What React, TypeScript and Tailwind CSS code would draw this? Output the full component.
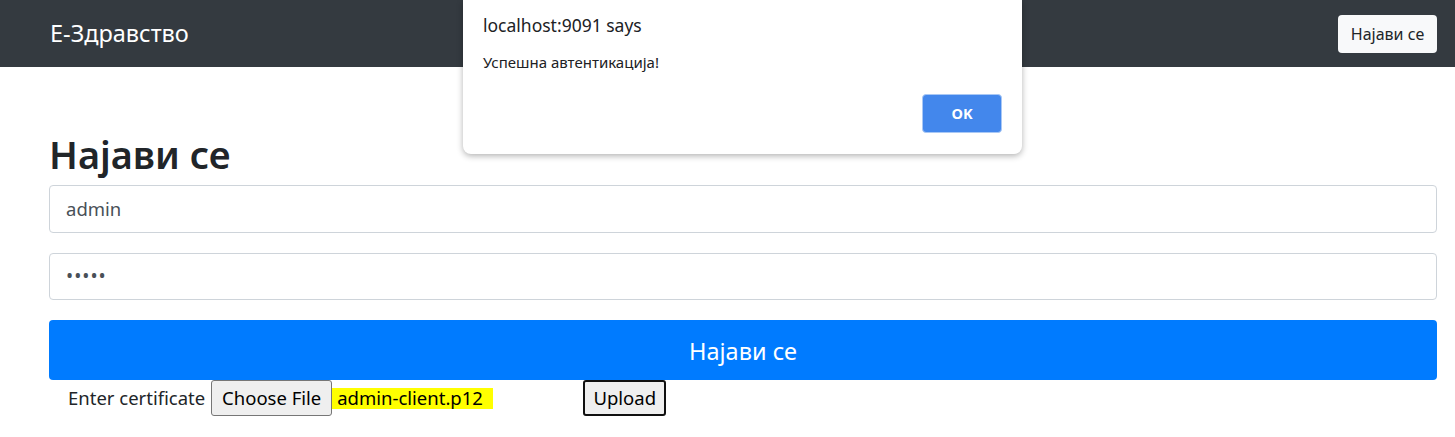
import React from "react";

const font = { fontFamily: '"Noto Sans", "Open Sans", sans-serif' };

export default function App() {
  return (
    <div className="relative min-h-[437px] bg-white" style={font}>
      <nav className="h-[67px] bg-[#343a40] flex items-center justify-between pl-[50px] pr-[18px]">
        <span className="text-white text-[23.5px] leading-none">E-Здравство</span>
        <button className="h-[38px] w-[99px] rounded-[4px] bg-[#f8f9fa] text-[#212529] text-[16px]">
          Најави се
        </button>
      </nav>

      <main className="pl-[49px] pr-[18px]">
        <h1 className="mt-[63px] mb-[7px] text-[38px] font-semibold leading-[48px] text-[#212529]">
          Најави се
        </h1>
        <div className="flex flex-col gap-[20px]">
          <div className="h-[48px] border border-[#ced4da] rounded-[4px] flex items-center px-[16px] text-[18.5px] text-[#495057]">
            admin
          </div>
          <div className="h-[47px] border border-[#ced4da] rounded-[4px] flex items-center px-[16px] text-[19px] text-[#495057] tracking-[1px]">
            •••••
          </div>
          <button className="h-[60px] rounded-[4px] bg-[#007bff] text-white text-[23.5px] pt-[3px]">
            Најави се
          </button>
        </div>
        <div className="flex items-center h-[36px] pl-[19px] text-[18.5px] text-[#212529]">
          <span className="mr-[6px]">Enter certificate</span>
          <button className="h-[36px] w-[121px] border border-[#767676] rounded-[3px] bg-[#efefef] text-[18.5px] text-black">
            Choose File
          </button>
          <span className="h-[21px] w-[161px] bg-[#ffff00] flex items-center pl-[5px] text-[18.5px] text-black">
            admin-client.p12
          </span>
          <button className="ml-[90px] h-[36px] w-[83px] border-2 border-[#101010] rounded-[3px] bg-[#efefef] text-[18.5px] text-black">
            Upload
          </button>
        </div>
      </main>

      <div className="absolute top-0 left-[463px] w-[559px] h-[154px] bg-white rounded-b-[8px] shadow-[0_2px_6px_rgba(0,0,0,0.3)] px-[20px]">
        <div className="pt-[13px] text-[17.5px] leading-[24px] text-[#202124]">localhost:9091 says</div>
        <div className="mt-[15px] text-[15px] leading-[20px] text-[#202124]">Успешна автентикација!</div>
        <div className="flex justify-end mt-[22px]">
          <button className="w-[80px] h-[39px] rounded-[4px] bg-[#4387ec] text-white text-[14.5px] font-bold border border-[#a9c8f5]">
            OK
          </button>
        </div>
      </div>
    </div>
  );
}
